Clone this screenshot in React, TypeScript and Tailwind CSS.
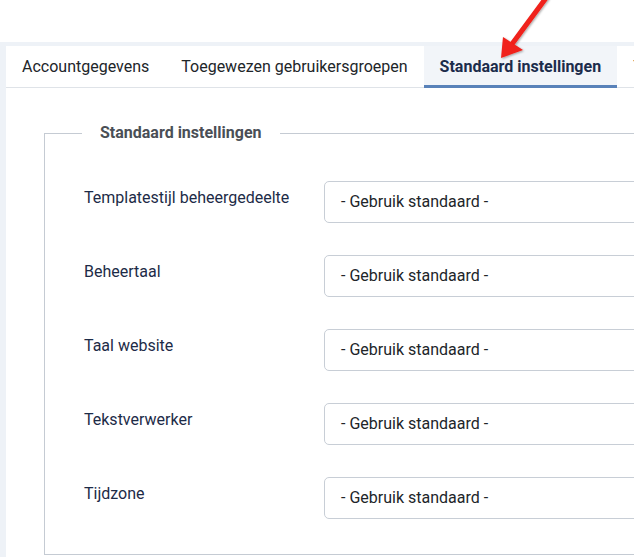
const fields = ["Templatestijl beheergedeelte", "Beheertaal", "Taal website", "Tekstverwerker", "Tijdzone"];

const tabs = [
  { label: "Accountgegevens", active: false },
  { label: "Toegewezen gebruikersgroepen", active: false },
  { label: "Standaard instellingen", active: true },
  { label: "Toegangsrechten", active: false },
];

export default function App() {
  return (
    <div className="relative w-[634px] h-[557px] overflow-hidden bg-white font-['Roboto',sans-serif]">
      <div className="h-[42px] bg-white" />
      <div className="h-[515px] bg-[#eef2f7] pt-[4px] pl-[6px]">
        <div className="h-full w-[900px] bg-white">
          <div className="flex border-b border-[#dfe3e8] h-[42px]">
            {tabs.map((t) => (
              <div
                key={t.label}
                className={
                  t.active
                    ? "px-4 flex items-center text-[16px] font-bold text-[#1c2c4b] bg-[#f2f5f9] border-b-[3px] border-[#5982b9] pt-[3px] -mb-px"
                    : "px-4 flex items-center text-[16px] text-[#212529]"
                }
              >
                {t.label}
              </div>
            ))}
          </div>
          <div className="pl-[38px] pt-[33px]">
            <fieldset className="border border-[#c5cbd3] w-[820px] h-[434px] pl-[39px] pt-[36px]">
              <legend className="-ml-[2px] px-[18px] text-[16px] font-bold text-[#4a4f56]">Standaard instellingen</legend>
              <div className="flex flex-col gap-[32px]">
                {fields.map((f) => (
                  <div key={f} className="flex items-start">
                    <div className="w-[240px] pt-[5px] text-[16px] text-[#1d2b47]">{f}</div>
                    <div className="w-[400px] h-[42px] border border-[#c8ced6] rounded-[5px] flex items-center pl-[16px] text-[16px] text-[#212529]">
                      - Gebruik standaard -
                    </div>
                  </div>
                ))}
              </div>
            </fieldset>
          </div>
        </div>
      </div>
      <svg className="absolute left-0 top-0" width="634" height="80" viewBox="0 0 634 80">
        <defs>
          <filter id="sh" x="-20%" y="-20%" width="140%" height="140%">
            <feDropShadow dx="1" dy="1" stdDeviation="1" floodColor="#000" floodOpacity="0.35" />
          </filter>
        </defs>
        <g filter="url(#sh)">
          <line x1="546" y1="-2" x2="512" y2="44" stroke="#f0201a" strokeWidth="5" strokeLinecap="round" />
          <polygon points="501,58 503,37 523,50" fill="#f0201a" />
        </g>
      </svg>
    </div>
  );
}
